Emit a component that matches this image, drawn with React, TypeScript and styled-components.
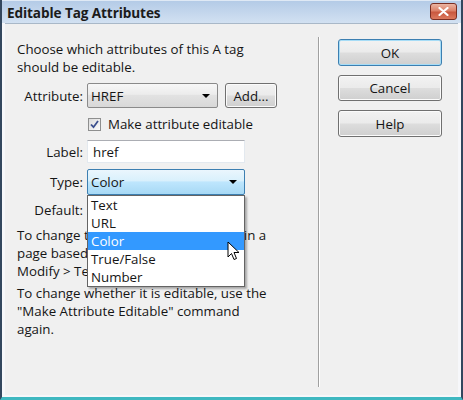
import React from "react";
import styled, { createGlobalStyle, css } from "styled-components";

const GlobalStyle = createGlobalStyle`
  html, body { margin: 0; padding: 0; background: #ffffff; }
  body { font-family: "Open Sans", "Noto Sans", sans-serif; font-size: 13.3px; color: #151515; }
  * { box-sizing: border-box; }
`;

const Window = styled.div`
  width: 463px;
  height: 400px;
  display: flex;
  flex-direction: column;
  background: #f6f7fa;
  border-left: 2px solid #33475e;
  border-right: 2px solid #33475e;
  border-bottom: 3px solid #3fb8c0;
`;

const TitleBar = styled.div`
  height: 23px;
  flex: none;
  display: flex;
  align-items: center;
  justify-content: space-between;
  padding: 0 4px 0 5px;
  background: linear-gradient(#b4cbe7, #c6d8ed 60%, #d2e1f2);
  border-top: 1px solid #dfe9f5;
`;

const Title = styled.span`
  font-weight: 700;
  font-size: 13.6px;
  color: #1b1b1b;
  letter-spacing: -0.1px;
`;

const CloseButton = styled.div`
  width: 27px;
  height: 17px;
  border-radius: 3px;
  border: 1px solid #7a2e22;
  background: linear-gradient(#ebb5a3, #dc8168 45%, #c9583f 55%, #dc7a5e);
  display: flex;
  align-items: center;
  justify-content: center;
  margin-top: -1px;
`;

const Client = styled.div`
  flex: 1;
  display: flex;
  margin: 0 3px 2px 3px;
  background: #f0f0f0;
  border-top: 1px solid #a9b8c8;
`;

const LeftPane = styled.div`
  width: 313px;
  flex: none;
  padding: 16px 0 0 12px;
  display: flex;
  flex-direction: column;
`;

const Text = styled.p<{ $gap?: number }>`
  margin: ${(p) => p.$gap ?? 0}px 0 0 0;
  line-height: 18px;
  white-space: nowrap;
`;

const Row = styled.div<{ $h: number; $gap?: number }>`
  display: grid;
  grid-template-columns: 66px auto;
  column-gap: 4px;
  align-items: center;
  height: ${(p) => p.$h}px;
  margin-top: ${(p) => p.$gap ?? 0}px;
`;

const Label = styled.span`
  text-align: right;
  white-space: nowrap;
`;

const Controls = styled.div`
  display: flex;
  align-items: center;
  gap: 7px;
  height: 100%;
  position: relative;
`;

const Select = styled.div<{ $w: number; $focused?: boolean }>`
  width: ${(p) => p.$w}px;
  height: 100%;
  display: flex;
  align-items: center;
  justify-content: space-between;
  padding: 0 7px 0 3px;
  border-radius: 2px;
  ${(p) =>
    p.$focused
      ? css`
          border: 1px solid #3c7fb1;
          background: linear-gradient(#eaf6fd, #d9f0fc 45%, #bee6fd 50%, #a7d9f5);
        `
      : css`
          border: 1px solid #8a8a8a;
          background: linear-gradient(#f7f7f7, #ececec 45%, #e2e2e2 50%, #d8d8d8);
        `}
`;

const Arrow = styled.span`
  width: 0;
  height: 0;
  border-left: 4px solid transparent;
  border-right: 4px solid transparent;
  border-top: 4px solid #000;
`;

const TextField = styled.div<{ $w: number }>`
  width: ${(p) => p.$w}px;
  height: 100%;
  background: #fff;
  border: 1px solid #e3e9ef;
  border-top-color: #abadb3;
  display: flex;
  align-items: center;
  padding-left: 5px;
`;

const Button = styled.div<{ $w: number; $h: number; $default?: boolean }>`
  width: ${(p) => p.$w}px;
  height: ${(p) => p.$h}px;
  display: flex;
  align-items: center;
  justify-content: center;
  border-radius: 3px;
  border: 1px solid ${(p) => (p.$default ? "#3c7fb1" : "#707070")};
  background: linear-gradient(#f2f2f2, #ebebeb 48%, #dddddd 52%, #cfcfcf);
  box-shadow: inset 0 0 0 1px ${(p) => (p.$default ? "#a6dcf6" : "#fbfbfb")};
  font-size: 13.3px;
`;

const CheckRow = styled.div`
  display: flex;
  align-items: center;
  gap: 7px;
  padding-left: 1px;
  white-space: nowrap;
`;

const CheckBox = styled.span`
  width: 13px;
  height: 13px;
  flex: none;
  border: 1px solid #8e8f8f;
  background: linear-gradient(135deg, #dcdcdc, #fbfbfb);
  display: flex;
  align-items: center;
  justify-content: center;
`;

const DropList = styled.div`
  position: absolute;
  top: 100%;
  left: 0;
  width: 158px;
  background: #fff;
  border: 1px solid #646464;
  box-shadow: 2px 2px 2px rgba(0, 0, 0, 0.3);
  z-index: 5;
`;

const DropItem = styled.div<{ $selected?: boolean }>`
  height: 18px;
  line-height: 18px;
  padding-left: 3px;
  font-size: 13.3px;
  ${(p) =>
    p.$selected &&
    css`
      background: #3399ff;
      color: #fff;
    `}
`;

const Cursor = styled.svg`
  position: absolute;
  left: 139px;
  top: 45px;
`;

const Divider = styled.div`
  width: 2px;
  flex: none;
  margin: 13px 0 8px 0;
  border-left: 1px solid #a0a0a0;
  border-right: 1px solid #ffffff;
`;

const RightPane = styled.div`
  flex: 1;
  padding: 15px 0 0 18px;
  display: flex;
  flex-direction: column;
  gap: 9px;
`;

export default function App() {
  const items = ["Text", "URL", "Color", "True/False", "Number"];
  return (
    <>
      <GlobalStyle />
      <Window>
        <TitleBar>
          <Title>Editable Tag Attributes</Title>
          <CloseButton>
            <svg width="11" height="9" viewBox="0 0 11 9">
              <path d="M1.5 1 L9.5 8 M9.5 1 L1.5 8" stroke="#ffffff" strokeWidth="2.2" strokeLinecap="round" />
            </svg>
          </CloseButton>
        </TitleBar>
        <Client>
          <LeftPane>
            <Text>
              Choose which attributes of this A tag
              <br />
              should be editable.
            </Text>
            <Row $h={25} $gap={7}>
              <Label>Attribute:</Label>
              <Controls>
                <Select $w={131}>
                  <span>HREF</span>
                  <Arrow />
                </Select>
                <Button $w={52} $h={25}>Add...</Button>
              </Controls>
            </Row>
            <Row $h={32}>
              <span />
              <CheckRow>
                <CheckBox>
                  <svg width="9" height="9" viewBox="0 0 9 9">
                    <path d="M1 4.5 L3.5 7.2 L8 1" fill="none" stroke="#3b4f8e" strokeWidth="1.8" />
                  </svg>
                </CheckBox>
                <span>Make attribute editable</span>
              </CheckRow>
            </Row>
            <Row $h={23}>
              <Label>Label:</Label>
              <Controls>
                <TextField $w={158}>href</TextField>
              </Controls>
            </Row>
            <Row $h={26} $gap={6}>
              <Label>Type:</Label>
              <Controls>
                <Select $w={158} $focused>
                  <span>Color</span>
                  <Arrow />
                </Select>
                <DropList>
                  {items.map((it) => (
                    <DropItem key={it} $selected={it === "Color"}>
                      {it}
                    </DropItem>
                  ))}
                  <Cursor width="14" height="21" viewBox="0 0 14 21">
                    <path
                      d="M1 1 L1 16 L4.5 12.5 L7 18.5 L9.5 17.5 L7 11.5 L12 11.5 Z"
                      fill="#ffffff"
                      stroke="#000000"
                      strokeWidth="1"
                      strokeLinejoin="round"
                    />
                  </Cursor>
                </DropList>
              </Controls>
            </Row>
            <Row $h={22} $gap={4}>
              <Label>Default:</Label>
              <Controls>
                <TextField $w={158} />
              </Controls>
            </Row>
            <Text $gap={5}>
              To change the value of this attribute in a
              <br />
              page based on this template, choose
              <br />
              Modify &gt; Template Properties.
            </Text>
            <Text $gap={4}>
              To change whether it is editable, use the
              <br />
              "Make Attribute Editable" command
              <br />
              again.
            </Text>
          </LeftPane>
          <Divider />
          <RightPane>
            <Button $w={104} $h={27} $default>OK</Button>
            <Button $w={104} $h={26}>Cancel</Button>
            <Button $w={104} $h={27}>Help</Button>
          </RightPane>
        </Client>
      </Window>
    </>
  );
}
